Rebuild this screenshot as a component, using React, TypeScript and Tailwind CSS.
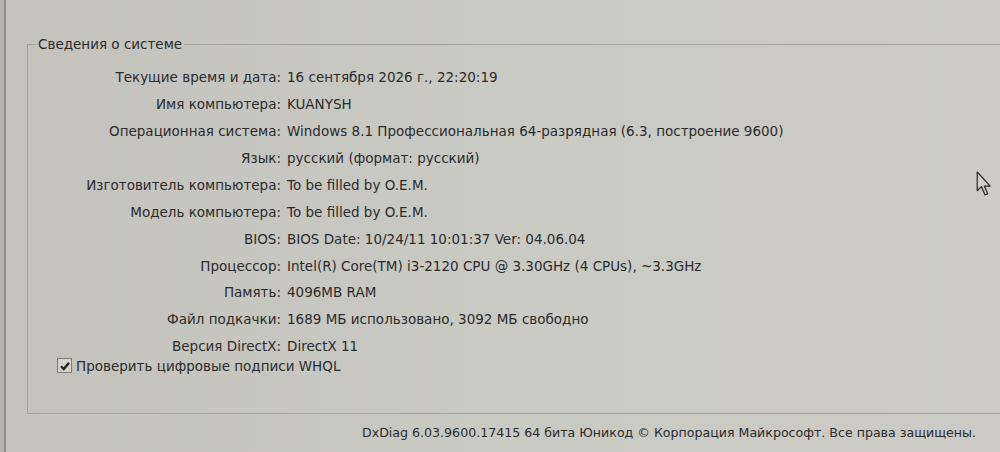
const rows: [string, string][] = [
  ["Текущие время и дата:", "16 сентября 2026 г., 22:20:19"],
  ["Имя компьютера:", "KUANYSH"],
  ["Операционная система:", "Windows 8.1 Профессиональная 64-разрядная (6.3, построение 9600)"],
  ["Язык:", "русский (формат: русский)"],
  ["Изготовитель компьютера:", "To be filled by O.E.M."],
  ["Модель компьютера:", "To be filled by O.E.M."],
  ["BIOS:", "BIOS Date: 10/24/11 10:01:37 Ver: 04.06.04"],
  ["Процессор:", "Intel(R) Core(TM) i3-2120 CPU @ 3.30GHz (4 CPUs), ~3.3GHz"],
  ["Память:", "4096MB RAM"],
  ["Файл подкачки:", "1689 МБ использовано, 3092 МБ свободно"],
  ["Версия DirectX:", "DirectX 11"],
];

export default function App() {
  return (
    <div className="relative flex h-[452px] w-[1000px] overflow-hidden bg-gradient-to-r from-[#c3c2bd] via-[#cacac5] to-[#cccbc6] font-['DejaVu_Sans',sans-serif] text-[13.5px] text-[#2b2b2b]">
      {/* window edge */}
      <div className="w-[6px] shrink-0 border-r-2 border-[#8d8c87] bg-[#b4b3ae]" />

      <div className="flex flex-1 flex-col">
        <fieldset className="mr-[-20px] ml-[21px] mt-[36px] h-[378px] border border-[#a3a29d]">
          <legend className="ml-[8px] px-[2px] leading-[16px]">Сведения о системе</legend>

          <div className="mt-[12px] flex flex-col">
            {rows.map(([k, v]) => (
              <div key={k} className="flex h-[26.9px] items-center">
                <div className="w-[253px] shrink-0 text-right">{k}</div>
                <div className="pl-[6px] whitespace-nowrap">{v}</div>
              </div>
            ))}
          </div>

          <label className="ml-[29px] -mt-[2px] flex h-[16px] items-center gap-[4px]">
            <span className="flex h-[15px] w-[15px] items-center justify-center border border-[#7d7c78] bg-[#d3d2cd]">
              <svg viewBox="0 0 12 12" className="h-[12px] w-[12px]">
                <path d="M2 6.2 L4.8 9 L10 2.8" fill="none" stroke="#1e1e1e" strokeWidth="2.2" />
              </svg>
            </span>
            <span>Проверить цифровые подписи WHQL</span>
          </label>
        </fieldset>

        <div className="flex h-[38px] items-center justify-end pr-[24px] text-[12.6px]">
          DxDiag 6.03.9600.17415 64 бита Юникод © Корпорация Майкрософт. Все права защищены.
        </div>
      </div>

      {/* mouse pointer */}
      <svg viewBox="0 0 16 26" className="absolute left-[976px] top-[171px] h-[27px] w-[17px]">
        <path d="M1 1 L1 19 L5 15 L8.5 23 L11 22 L7.8 14.5 L13.5 14.5 Z" fill="#cfcec9" stroke="#2b2b2b" strokeWidth="1.2" strokeLinejoin="round" />
      </svg>
    </div>
  );
}
